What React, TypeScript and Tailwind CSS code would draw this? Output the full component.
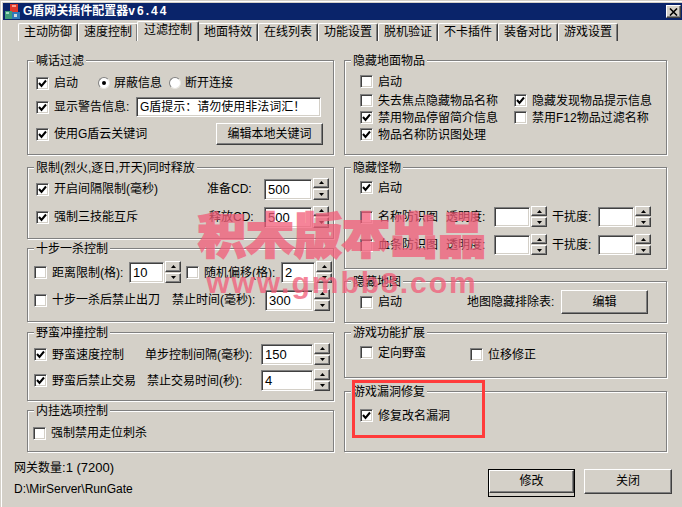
import React from 'react';

const tabs = ['主动防御', '速度控制', '过滤控制', '地面特效', '在线列表', '功能设置', '脱机验证', '不卡插件', '装备对比', '游戏设置'];

const sunken = 'border border-t-[#808080] border-l-[#808080] border-r-white border-b-white shadow-[inset_1px_1px_0_#404040,inset_-1px_-1px_0_#d4d0c8]';
const raised = 'border border-t-white border-l-white border-r-[#404040] border-b-[#404040] shadow-[inset_-1px_-1px_0_#808080] bg-[#d4d0c8]';

const Group: React.FC<{ title: string; className: string; children?: React.ReactNode }> = ({ title, className, children }) => (
  <div className={`relative border border-[#808080] shadow-[1px_1px_0_#fff,inset_1px_1px_0_#fff] ${className}`}>
    <span className="absolute -top-[7px] left-[6px] bg-[#d4d0c8] px-[2px] leading-[15px] whitespace-nowrap">{title}</span>
    {children}
  </div>
);

const Check: React.FC<{ label: string; checked?: boolean; labelClass?: string; className?: string }> = ({ label, checked, labelClass = '', className = '' }) => (
  <div className={`flex items-center shrink-0 ${className}`}>
    <span className={`flex items-center justify-center w-[13px] h-[13px] bg-white shrink-0 ${sunken}`}>
      {checked && (
        <svg width="9" height="9" viewBox="0 0 9 9">
          <path d="M1 4 L3.5 7 L8 1.5" fill="none" stroke="#000" strokeWidth="2" />
        </svg>
      )}
    </span>
    <span className={`ml-[5px] pt-[1px] whitespace-nowrap ${labelClass}`}>{label}</span>
  </div>
);

const Radio: React.FC<{ label: string; checked?: boolean; className?: string }> = ({ label, checked, className = '' }) => (
  <div className={`flex items-center shrink-0 ${className}`}>
    <span className="flex items-center justify-center w-[12px] h-[12px] rounded-full bg-white border border-t-[#808080] border-l-[#808080] border-r-[#e8e6e0] border-b-[#e8e6e0]">
      {checked && <span className="w-[4px] h-[4px] rounded-full bg-black" />}
    </span>
    <span className="ml-[4px] pt-[1px] whitespace-nowrap">{label}</span>
  </div>
);

const Arrow: React.FC<{ down?: boolean }> = ({ down }) => (
  <svg width="5" height="3" viewBox="0 0 5 3">
    <path d={down ? 'M0 0 H5 L2.5 3 Z' : 'M0 3 H5 L2.5 0 Z'} fill="#000" />
  </svg>
);

const Spin: React.FC<{ value?: string; w: string; h?: string }> = ({ value, w, h = 'h-[21px]' }) => (
  <div className={`flex shrink-0 ${h}`}>
    <div className={`flex items-center bg-white pl-[3px] text-[13px] ${sunken} ${w}`}>{value}</div>
    <div className="flex flex-col w-[16px] ml-[1px] -mt-[1px]">
      <span className={`flex-1 flex items-center justify-center ${raised}`}><Arrow /></span>
      <span className={`flex-1 flex items-center justify-center mt-[1px] ${raised}`}><Arrow down /></span>
    </div>
  </div>
);

const Button: React.FC<{ label: string; className: string }> = ({ label, className }) => (
  <div className={`flex items-center justify-center ${raised} ${className}`}>{label}</div>
);

export default function App() {
  return (
    <div className="relative w-[682px] h-[507px] overflow-hidden bg-[#d4d0c8] pl-[2px] pt-[3px] shadow-[inset_1px_1px_0_#d4d0c8,inset_2px_2px_0_#fff] text-[12px] leading-[15px] text-black font-['Liberation_Sans','Noto_Sans_CJK_SC',sans-serif]">
      {/* title bar */}
      <div className="flex items-center h-[17px] ml-[1px] bg-[#0a246a]">
        <svg width="16" height="16" viewBox="0 0 16 16" className="ml-[2px] shrink-0">
          <rect x="5" y="0" width="8" height="8" fill="#e03a2c" />
          <rect x="7" y="1" width="4" height="2" fill="#f6a090" />
          <rect x="0" y="7" width="7" height="8" fill="#3f9a78" />
          <rect x="7" y="8" width="8" height="7" fill="#2f78b8" />
          <rect x="1" y="8" width="3" height="2" fill="#a6dcc0" />
          <rect x="9" y="10" width="3" height="3" fill="#d0d8e0" />
        </svg>
        <span className="ml-[2px] font-bold text-white whitespace-nowrap text-[12px]">
          G盾网关插件配置器<span className="tracking-[2px]">v6.44</span>
        </span>
        <span className={`flex items-center justify-center w-[15px] h-[13px] ml-auto mr-[1px] ${raised}`}>
          <svg width="9" height="8" viewBox="0 0 9 8">
            <path d="M1 0.5 L8 7.5 M8 0.5 L1 7.5" stroke="#000" strokeWidth="1.6" fill="none" />
          </svg>
        </span>
      </div>

      {/* tabs */}
      <div className="flex items-end h-[20px] pl-[16px] mt-[1px]">
        {tabs.map((t) => {
          const active = t === '过滤控制';
          return (
            <div
              key={t}
              className={`flex items-center justify-center border-t border-l border-r border-t-white border-l-white border-r-[#404040] rounded-t-[2px] shadow-[inset_-1px_0_0_#808080] whitespace-nowrap ${
                active ? 'w-[62px] h-[20px] -mx-px z-10 pb-[2px]' : 'w-[60px] h-[18px]'
              }`}
            >
              {t}
            </div>
          );
        })}
      </div>

      {/* two columns of group boxes */}
      <div className="flex mt-[19px] ml-[25px]">
        <div className="flex flex-col w-[307px]">
          <Group title="喊话过滤" className="h-[95px] pt-[12px] pl-[8px] pr-[10px]">
            <div className="flex items-center h-[20px]">
              <Check label="启动" checked />
              <Radio label="屏蔽信息" checked className="ml-[20px]" />
              <Radio label="断开连接" className="ml-[7px]" />
            </div>
            <div className="flex items-center h-[22px] mt-[3px]">
              <Check label="显示警告信息:" checked labelClass="w-[82px]" />
              <div className={`flex items-center bg-white w-[185px] h-[20px] pl-[3px] whitespace-nowrap ${sunken}`}>G盾提示：请勿使用非法词汇！</div>
            </div>
            <div className="flex items-center h-[24px] mt-[4px]">
              <Check label="使用G盾云关键词" checked />
              <Button label="编辑本地关键词" className="ml-auto w-[107px] h-[22px]" />
            </div>
          </Group>

          <Group title="限制(烈火,逐日,开天)同时释放" className="h-[72px] mt-[12px] pt-[10px] pl-[8px] pr-[4px]">
            <div className="flex items-center h-[22px]">
              <Check label="开启间隔限制(毫秒)" checked />
              <span className="ml-auto w-[57px] pt-[1px] whitespace-nowrap">准备CD:</span>
              <Spin value="500" w="w-[48px]" />
            </div>
            <div className="flex items-center h-[22px] mt-[6px]">
              <Check label="强制三技能互斥" checked />
              <span className="ml-auto w-[55px] pt-[1px] whitespace-nowrap">释放CD:</span>
              <Spin value="500" w="w-[48px]" />
            </div>
          </Group>

          <Group title="十步一杀控制" className="h-[74px] mt-[9px] pt-[12px] pl-[6px] pr-[3px]">
            <div className="flex items-center h-[23px]">
              <Check label="距离限制(格):" labelClass="w-[77px]" />
              <Spin value="10" w="w-[35px]" />
              <Check label="随机偏移(格):" labelClass="w-[77px]" className="ml-[5px]" />
              <Spin value="2" w="w-[34px]" />
            </div>
            <div className="flex items-center h-[22px] mt-[5px]">
              <Check label="十步一杀后禁止出刀" />
              <span className="ml-auto w-[93px] pt-[1px] whitespace-nowrap">禁止时间(毫秒):</span>
              <Spin value="300" w="w-[48px]" />
            </div>
          </Group>

          <Group title="野蛮冲撞控制" className="h-[69px] mt-[10px] pt-[11px] pl-[6px] pr-[3px]">
            <div className="flex items-center h-[21px]">
              <Check label="野蛮速度控制" checked />
              <span className="ml-auto w-[116px] pt-[1px] whitespace-nowrap">单步控制间隔(毫秒):</span>
              <Spin value="150" w="w-[52px]" />
            </div>
            <div className="flex items-center h-[21px] mt-[5px]">
              <Check label="野蛮后禁止交易" checked />
              <span className="ml-auto w-[114px] pt-[1px] whitespace-nowrap">禁止交易时间(秒):</span>
              <Spin value="4" w="w-[52px]" />
            </div>
          </Group>

          <Group title="内挂选项控制" className="h-[42px] mt-[9px] pt-[14px] pl-[5px]">
            <Check label="强制禁用走位刺杀" className="h-[16px]" />
          </Group>
        </div>

        <div className="flex flex-col w-[323px] ml-[10px]">
          <Group title="隐藏地面物品" className="h-[95px] pt-[12px] pl-[15px]">
            <Check label="启动" className="h-[17px]" />
            <div className="grid grid-cols-[154px_1fr] auto-rows-[17px] mt-[2px]">
              <Check label="失去焦点隐藏物品名称" />
              <Check label="隐藏发现物品提示信息" checked />
              <Check label="禁用物品停留简介信息" checked />
              <Check label="禁用F12物品过滤名称" />
              <Check label="物品名称防识图处理" checked />
            </div>
          </Group>

          <Group title="隐藏怪物" className="h-[102px] mt-[12px] pt-[11px] pl-[15px]">
            <Check label="启动" checked className="h-[17px]" />
            <div className="flex items-center h-[20px] mt-[11px]">
              <Check label="名称防识图" labelClass="w-[68px]" />
              <span className="w-[48px] pt-[1px] whitespace-nowrap">透明度:</span>
              <Spin w="w-[36px]" h="h-[20px]" />
              <span className="ml-[5px] w-[46px] pt-[1px] whitespace-nowrap">干扰度:</span>
              <Spin w="w-[36px]" h="h-[20px]" />
            </div>
            <div className="flex items-center h-[20px] mt-[8px]">
              <Check label="血条防识图" labelClass="w-[68px]" />
              <span className="w-[48px] pt-[1px] whitespace-nowrap">透明度:</span>
              <Spin w="w-[36px]" h="h-[20px]" />
              <span className="ml-[5px] w-[46px] pt-[1px] whitespace-nowrap">干扰度:</span>
              <Spin w="w-[36px]" h="h-[20px]" />
            </div>
          </Group>

          <Group title="隐藏地图" className="h-[42px] mt-[12px] pt-[8px] pl-[15px]">
            <div className="flex items-center h-[24px]">
              <Check label="启动" labelClass="w-[89px]" />
              <span className="w-[94px] pt-[1px] whitespace-nowrap">地图隐藏排除表:</span>
              <Button label="编辑" className="w-[87px] h-[24px]" />
            </div>
          </Group>

          <Group title="游戏功能扩展" className="h-[46px] mt-[9px] pt-[11px] pl-[15px]">
            <div className="flex items-start">
              <Check label="定向野蛮" className="h-[17px]" />
              <Check label="位移修正" className="h-[17px] mt-[2px] ml-[44px]" />
            </div>
          </Group>

          <Group title="游戏漏洞修复" className="h-[61px] mt-[13px] pt-[15px] pl-[15px]">
            <Check label="修复改名漏洞" checked className="h-[17px]" />
          </Group>
        </div>
      </div>

      {/* status lines and buttons */}
      <div className="flex mt-[5px] pl-[12px]">
        <div className="flex flex-col pt-[3px]">
          <span className="leading-[15px]">网关数量<span className="text-[13px]">:1 (7200)</span></span>
          <span className="leading-[15px] mt-[6px]">D:\MirServer\RunGate</span>
        </div>
        <div className="flex ml-auto mr-[10px] mt-[12px]">
          <div className="border border-black">
            <Button label="修改" className="w-[85px] h-[23px]" />
          </div>
          <Button label="关闭" className="w-[88px] h-[25px] ml-[9px]" />
        </div>
      </div>

      {/* red marker drawn over the screenshot */}
      <div className="absolute left-[352px] top-[380px] w-[133px] h-[58px] border-[3px] border-[#ff3b3b] pointer-events-none" />

      {/* watermark */}
      <div className="absolute left-[197px] top-[206px] w-[290px] text-center pointer-events-none whitespace-nowrap text-[#f25c78] opacity-75">
        <div className="text-[48px] leading-[62px] font-black [-webkit-text-stroke:2px_#f25c78]">积木版本出品</div>
        <div className="text-[30px] leading-[30px] font-bold tracking-[2px] font-['Liberation_Sans',sans-serif]">www.gmbb8.com</div>
      </div>
    </div>
  );
}
